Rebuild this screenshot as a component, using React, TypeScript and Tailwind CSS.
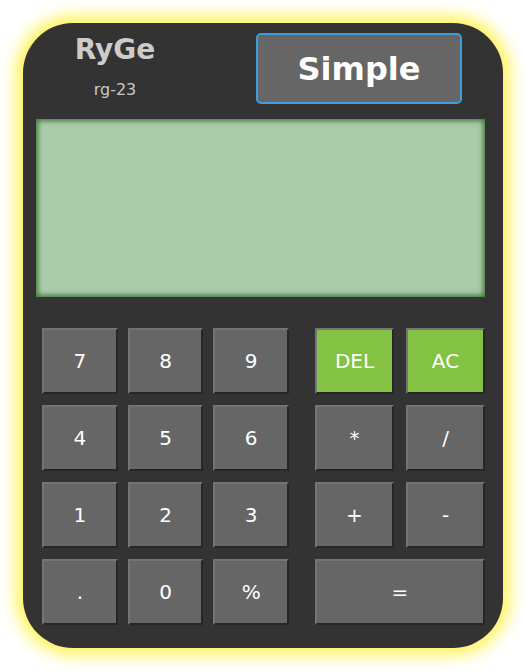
import React from "react";

const base =
  "flex items-center justify-center h-[66px] border-2 border-t-[#747474] border-l-[#747474] border-r-[#262626] border-b-[#262626] text-white text-[20px]";

function Key({ label, green, className = "" }: { label: string; green?: boolean; className?: string }) {
  return (
    <div
      className={`${base} ${green ? "bg-[#84c244]" : "bg-[#666666]"} ${className}`}
      style={{ fontFamily: '"DejaVu Sans", Verdana, sans-serif' }}
    >
      {label}
    </div>
  );
}

export default function App() {
  const left = ["7", "8", "9", "4", "5", "6", "1", "2", "3", ".", "0", "%"];
  return (
    <div className="w-[526px] h-[672px] bg-white pt-[23px] pl-[23px]" style={{ fontFamily: '"DejaVu Sans", Verdana, sans-serif' }}>
      <div className="w-[480px] h-[625px] rounded-[50px] bg-[#333333] shadow-[0_0_16px_7px_#fff35a] flex flex-col">
        <div className="flex pt-[10px] h-[96px]">
          <div className="ml-[17px] w-[150px] flex flex-col items-center">
            <div className="text-[28px] font-bold text-[#cccccc] leading-[32px] mt-[1px]">RyGe</div>
            <div className="text-[16px] text-[#c8c8c8] leading-[20px] mt-[14px]">rg-23</div>
          </div>
          <div className="ml-[66px] w-[206px] h-[71px] rounded-[5px] border-2 border-[#3a9fd8] bg-[#666666] flex items-center justify-center">
            <span className="text-white text-[32px] font-bold">Simple</span>
          </div>
        </div>
        <div className="ml-[13px] w-[449px] h-[178px] bg-[#abcbab] shadow-[inset_0_0_5px_2px_#3f7a3a]" />
        <div className="flex mt-[31px] pl-[19px]">
          <div className="w-[247px] grid grid-cols-3 gap-x-[10px] gap-y-[11px]">
            {left.map((k) => (
              <Key key={k} label={k} />
            ))}
          </div>
          <div className="ml-[26px] w-[170px] grid grid-cols-2 gap-x-[12px] gap-y-[11px]">
            <Key label="DEL" green />
            <Key label="AC" green />
            <Key label="*" />
            <Key label="/" />
            <Key label="+" />
            <Key label="-" />
            <Key label="=" className="col-span-2" />
          </div>
        </div>
      </div>
    </div>
  );
}
